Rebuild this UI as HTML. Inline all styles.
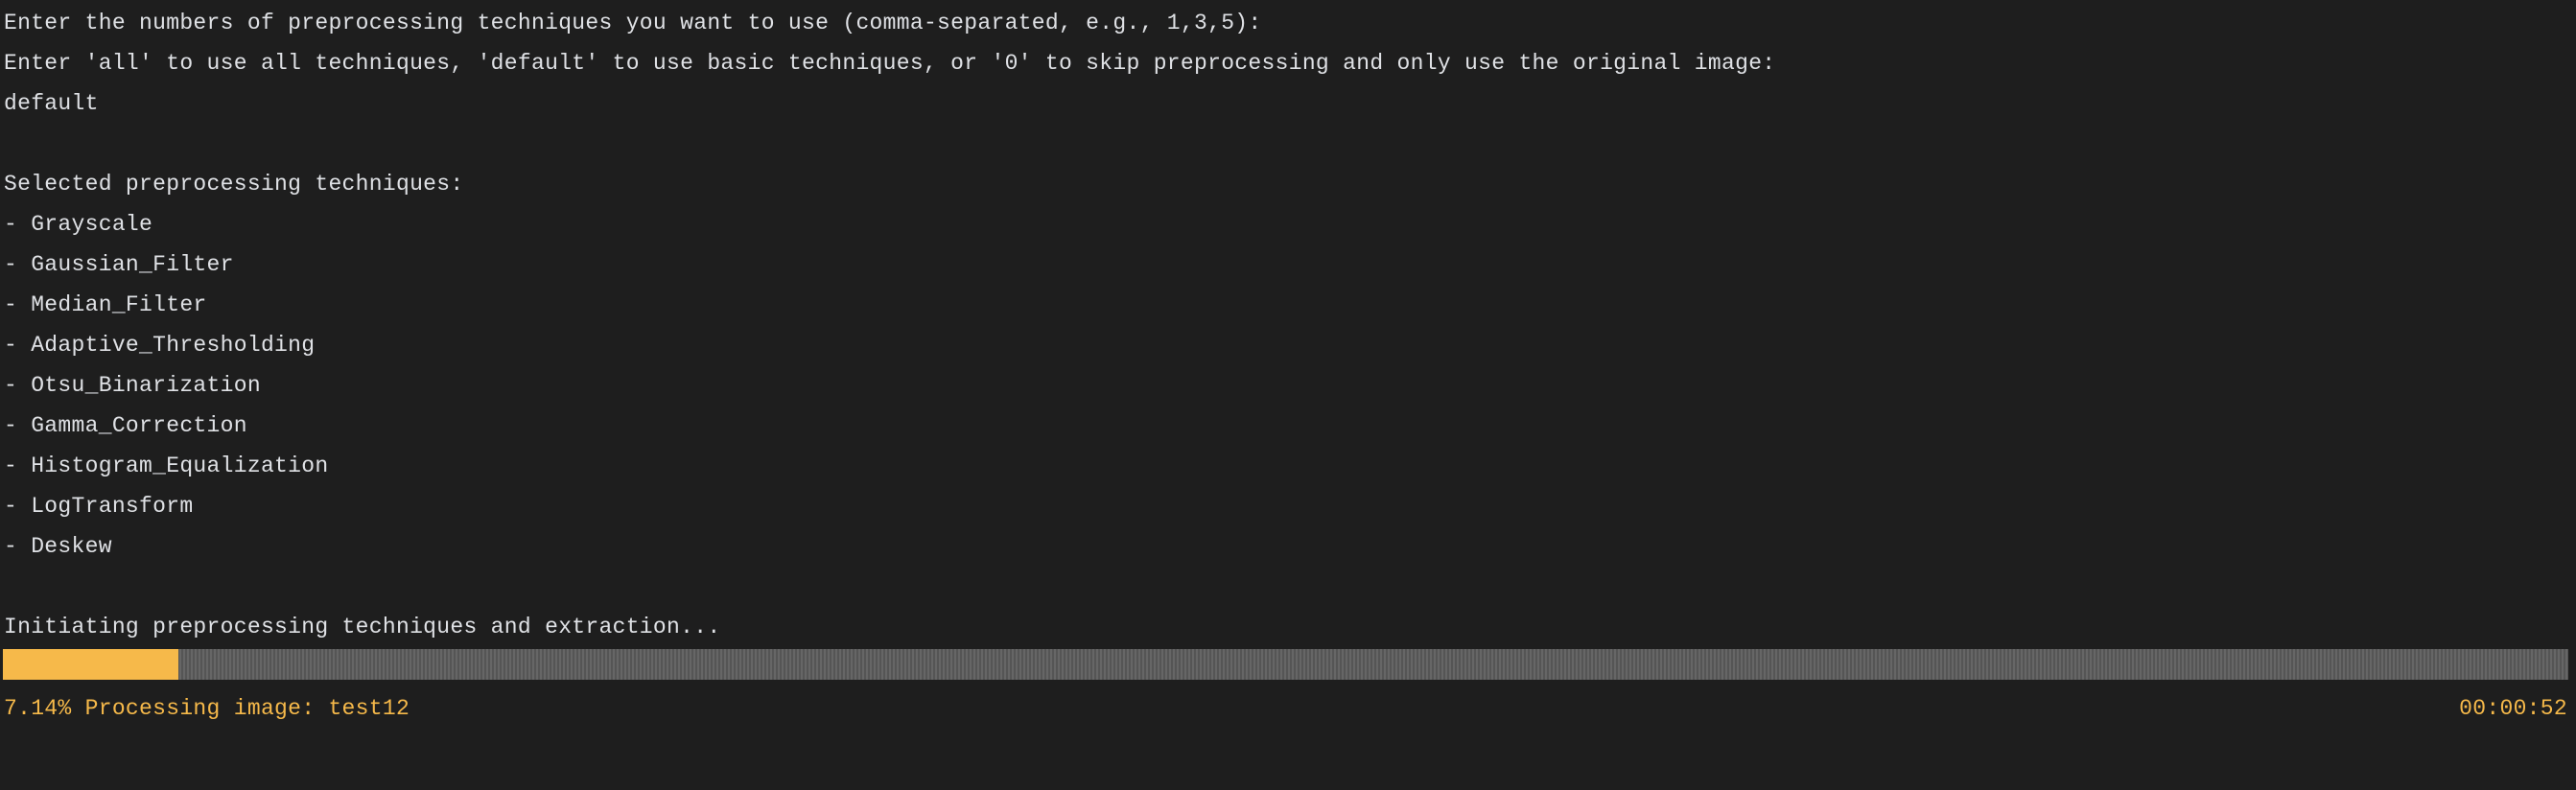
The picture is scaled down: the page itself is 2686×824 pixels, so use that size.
<!DOCTYPE html>
<html><head><meta charset="utf-8"><style>
html,body{margin:0;padding:0;background:#1e1e1e;}
body{width:2686px;height:824px;overflow:hidden;position:relative;font-family:"Liberation Mono","DejaVu Sans Mono",monospace;font-size:23px;letter-spacing:0.3px;color:#dfe1e5;}
.t{position:absolute;left:4px;top:3px;line-height:42px;white-space:pre;}
.bar{position:absolute;left:3px;top:677px;width:2675px;height:32px;background:#5b5b5b;
background-image:repeating-linear-gradient(90deg,#666 0 2px,#555 2px 4px);}
.fill{position:absolute;left:3px;top:677px;width:183px;height:32px;background:#f6b94a;}
.p{position:absolute;top:718px;line-height:42px;color:#f6b94a;white-space:pre;}
</style></head><body>
<div class="t">Enter the numbers of preprocessing techniques you want to use (comma-separated, e.g., 1,3,5):
Enter 'all' to use all techniques, 'default' to use basic techniques, or '0' to skip preprocessing and only use the original image:
default

Selected preprocessing techniques:
- Grayscale
- Gaussian_Filter
- Median_Filter
- Adaptive_Thresholding
- Otsu_Binarization
- Gamma_Correction
- Histogram_Equalization
- LogTransform
- Deskew

Initiating preprocessing techniques and extraction...</div>
<div class="bar"></div><div class="fill"></div>
<div class="p" style="left:4px">7.14% Processing image: test12</div>
<div class="p" style="right:9px">00:00:52</div>
</body></html>
